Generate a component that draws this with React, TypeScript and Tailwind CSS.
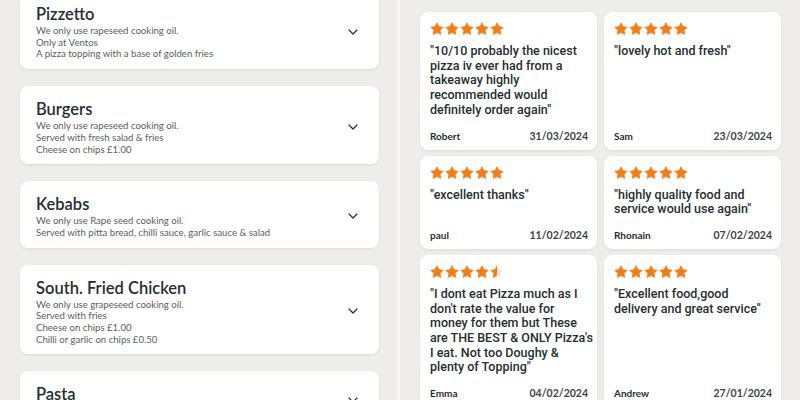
import React from "react";

type MenuSection = {
  title: string;
  lines: string[];
};

type Review = {
  rating: number;
  text: string;
  name: string;
  date: string;
};

const sections: MenuSection[] = [
  {
    title: "Pizzetto",
    lines: ["We only use rapeseed cooking oil.", "Only at Ventos", "A pizza topping with a base of golden fries"],
  },
  {
    title: "Burgers",
    lines: ["We only use rapeseed cooking oil.", "Served with fresh salad & fries", "Cheese on chips £1.00"],
  },
  {
    title: "Kebabs",
    lines: ["We only use Rape seed cooking oil.", "Served with pitta bread, chilli sauce, garlic sauce & salad"],
  },
  {
    title: "South. Fried Chicken",
    lines: [
      "We only use grapeseed cooking oil.",
      "Served with fries",
      "Cheese on chips £1.00",
      "Chilli or garlic on chips £0.50",
    ],
  },
  {
    title: "Pasta",
    lines: ["We only use rapeseed cooking oil."],
  },
];

// line breaks kept as they wrap on the live page
const reviews: Review[] = [
  {
    rating: 5,
    text: '"10/10 probably the nicest\npizza iv ever had from a\ntakeaway highly\nrecommended would\ndefinitely order again"',
    name: "Robert",
    date: "31/03/2024",
  },
  { rating: 5, text: '"lovely hot and fresh"', name: "Sam", date: "23/03/2024" },
  { rating: 5, text: '"excellent thanks"', name: "paul", date: "11/02/2024" },
  {
    rating: 5,
    text: '"highly quality food and\nservice would use again"',
    name: "Rhonain",
    date: "07/02/2024",
  },
  {
    rating: 4.5,
    text: '"I dont eat Pizza much as I\ndon\'t rate the value for\nmoney for them but These\nare THE BEST & ONLY Pizza\'s\nI eat. Not too Doughy &\nplenty of Topping"',
    name: "Emma",
    date: "04/02/2024",
  },
  {
    rating: 5,
    text: '"Excellent food,good\ndelivery and great service"',
    name: "Andrew",
    date: "27/01/2024",
  },
];

const STAR =
  "M12 1.2l3.4 6.7 7.4 1.1-5.4 5.2 1.3 7.4L12 18.1l-6.7 3.5 1.3-7.4L1.2 9l7.4-1.1z";

// one star, fill is 0..1
const Star = ({ fill, id }: { fill: number; id: string }) => (
  <svg width="14" height="14" viewBox="0 0 24 24">
    <defs>
      <clipPath id={id}>
        <rect x="0" y="0" width={24 * fill} height="24" />
      </clipPath>
    </defs>
    <path d={STAR} fill="#fde3cc" strokeLinejoin="round" />
    <path d={STAR} fill="#f57c14" stroke="#f57c14" strokeWidth="1" strokeLinejoin="round" clipPath={`url(#${id})`} />
  </svg>
);

const Stars = ({ rating, idx }: { rating: number; idx: number }) => (
  <div className="flex gap-[1px]">
    {[0, 1, 2, 3, 4].map((i) => (
      <Star key={i} id={`s${idx}-${i}`} fill={Math.max(0, Math.min(1, rating - i))} />
    ))}
  </div>
);

const Chevron = () => (
  <svg width="12" height="12" viewBox="0 0 12 12" fill="none">
    <path d="M2 4l4 4 4-4" stroke="#242e30" strokeWidth="1.2" strokeLinecap="round" strokeLinejoin="round" />
  </svg>
);

const MenuCard = ({ section }: { section: MenuSection }) => (
  <div className="flex items-center justify-between bg-white rounded-lg shadow-[0_1px_3px_rgba(0,0,0,0.08)] pl-4 pr-5 pt-3 pb-[9px]">
    <div>
      <h3 className="text-[16.5px] leading-[22px] font-semibold text-[#242e30]">{section.title}</h3>
      {section.lines.map((l) => (
        <p key={l} className="text-[9.6px] leading-[11.7px] text-[#585e60]">
          {l}
        </p>
      ))}
    </div>
    <Chevron />
  </div>
);

const ReviewCard = ({ review, idx }: { review: Review; idx: number }) => (
  <div className="flex flex-col bg-white rounded-lg shadow-[0_1px_3px_rgba(0,0,0,0.08)] pl-[10px] pr-[8px] pt-[10px] pb-[8px]">
    <Stars rating={review.rating} idx={idx} />
    <p className="mt-[8px] whitespace-pre font-[family-name:Roboto,sans-serif] text-[12.5px] leading-[14.7px] font-medium text-[#242e30]">
      {review.text}
    </p>
    <div className="mt-auto pt-3 flex justify-between items-center pr-px">
      <span className="text-[10px] leading-3 font-bold text-[#242e30]">{review.name}</span>
      <span className="text-[10.5px] leading-3 font-bold text-[#3c4446]">{review.date}</span>
    </div>
  </div>
);

export default function App() {
  return (
    <div className="flex w-[800px] h-[400px] overflow-hidden bg-[#eeedea] font-[family-name:Lato,sans-serif]">
      <div className="w-[397px] shrink-0 overflow-hidden pl-5 pr-[18px]">
        <div className="-mt-[9px] flex flex-col gap-[17px]">
          {sections.map((s) => (
            <MenuCard key={s.title} section={s} />
          ))}
        </div>
      </div>
      <div className="w-[3px] shrink-0 bg-[#f7f7f5]" />
      <div className="flex-1 overflow-hidden pl-5 pt-3">
        <div className="grid grid-cols-[177px_177px] gap-x-[7px] gap-y-[6px]">
          {reviews.map((r, i) => (
            <ReviewCard key={r.name} review={r} idx={i} />
          ))}
        </div>
      </div>
    </div>
  );
}
